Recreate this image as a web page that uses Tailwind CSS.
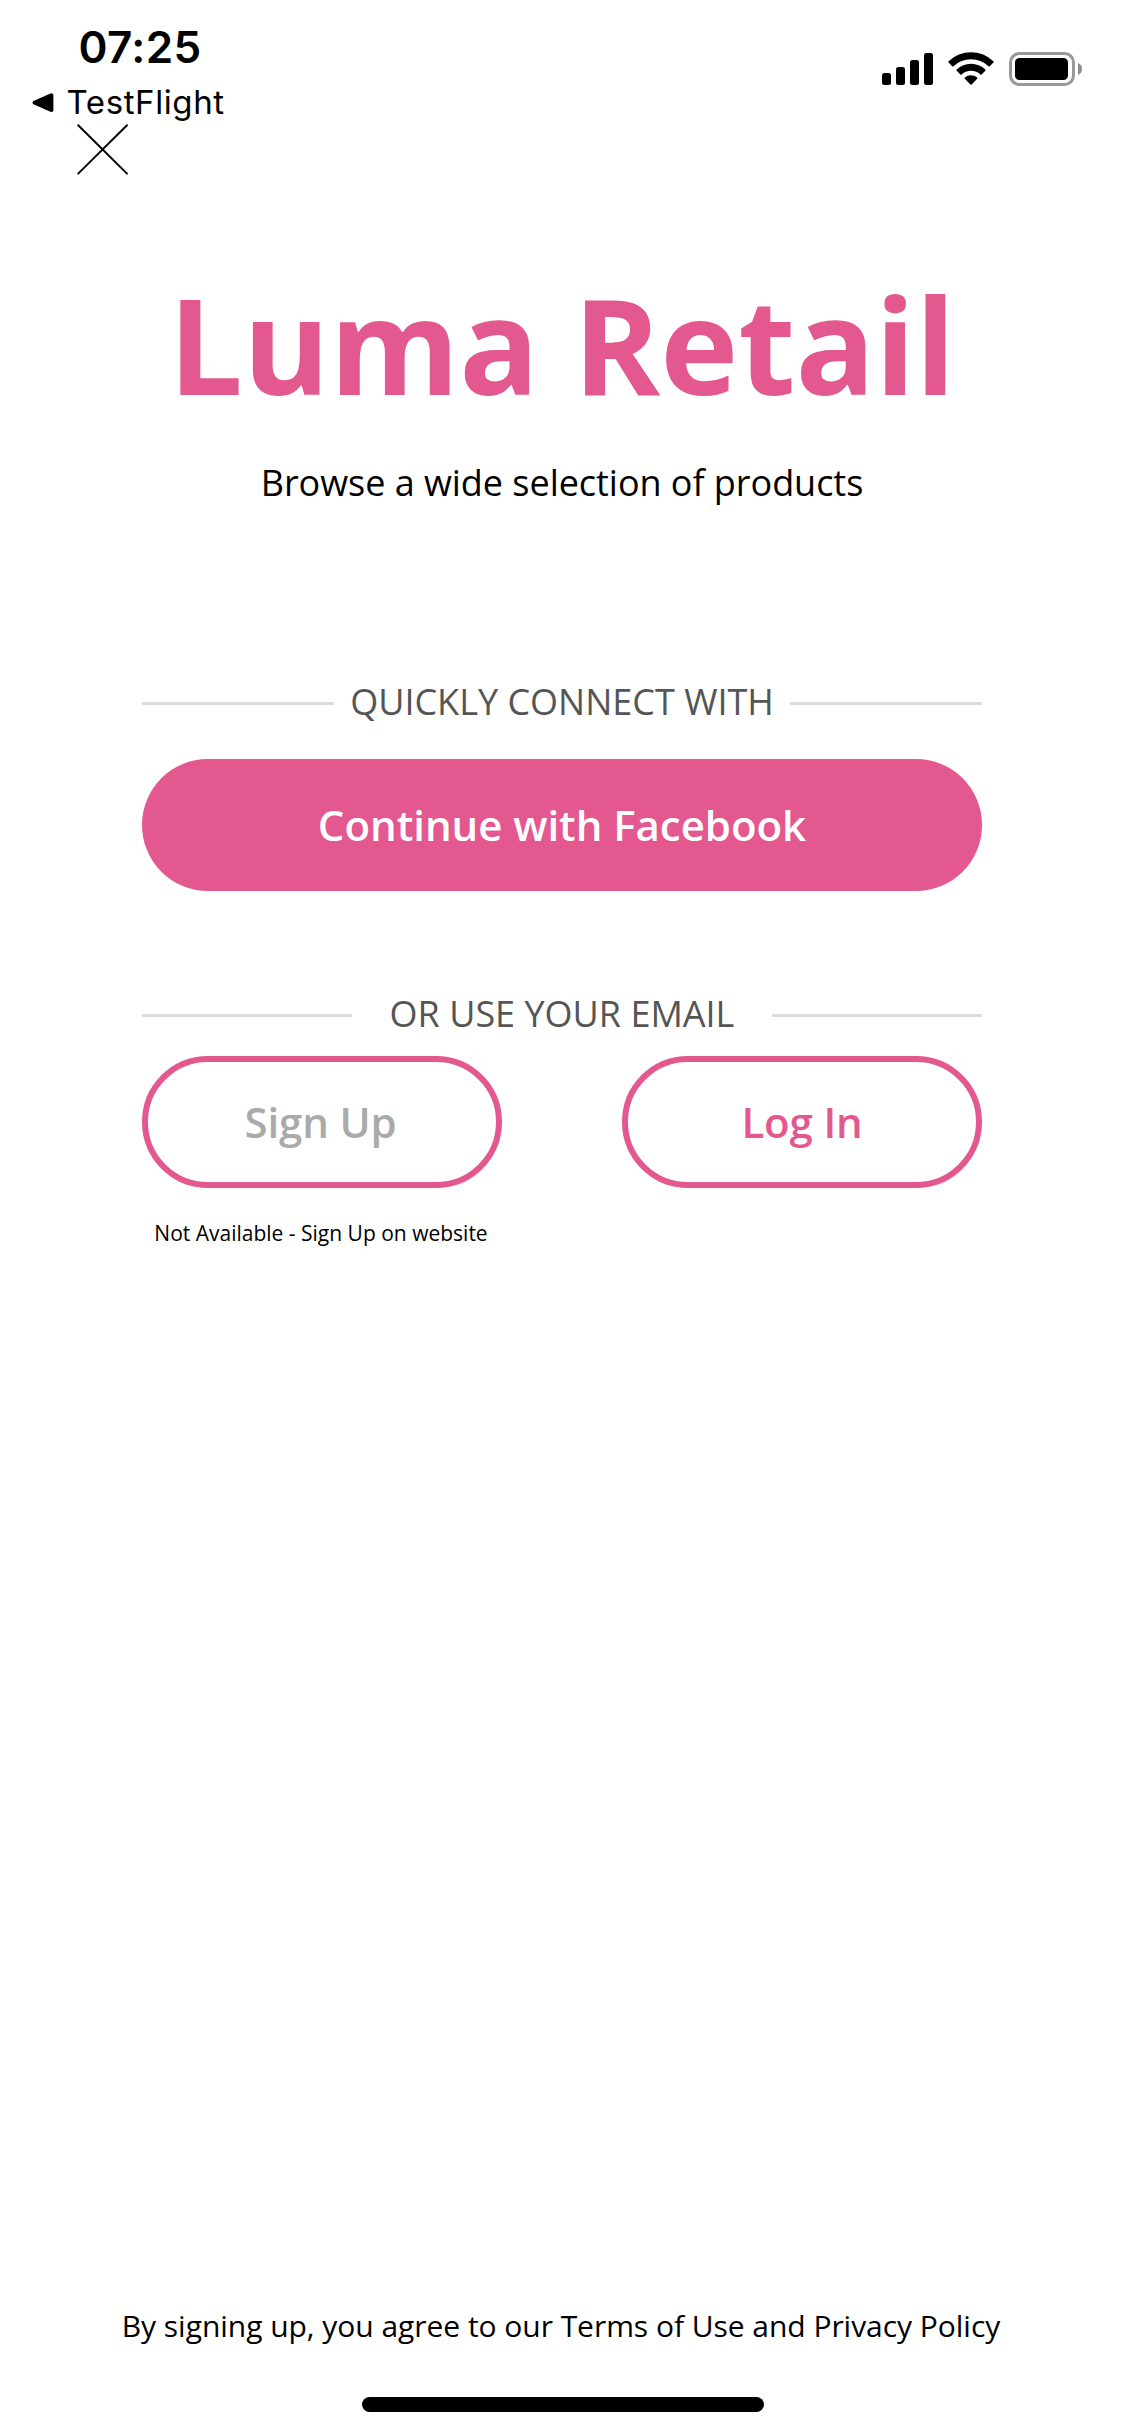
<!DOCTYPE html>
<html lang="en">
<head>
<meta charset="utf-8">
<title>Luma Retail</title>
<script src="https://cdn.jsdelivr.net/npm/@tailwindcss/browser@4"></script>
</head>
<body class="bg-white">
<div class="flex h-[2436px] w-[1125px] flex-col overflow-hidden bg-white font-['Open_Sans',sans-serif] text-black">

  <!-- Status bar -->
  <header class="flex h-[122px] shrink-0 justify-between font-['Inter',sans-serif]">
    <div class="flex flex-col pt-[23px]">
      <span class="pl-[78.5px] text-[44px] leading-[48px] font-[560] tracking-[0.4px]">07:25</span>
      <div class="mt-[11px] flex items-center pl-8">
        <svg class="mt-px h-[22px] w-[22px]" viewBox="0 0 22 22"><path d="M2 10.3 19 2.8Q20 2.4 20 3.4V17.9Q20 18.9 19 18.5L2 11Z" fill="#000" stroke="#000" stroke-width="2.8" stroke-linejoin="round"/></svg>
        <span class="pl-[12.5px] text-[33px] leading-10 tracking-[0.6px]">TestFlight</span>
      </div>
    </div>
    <div class="flex items-start gap-[14px] pt-[52px] pr-[42px]">
      <svg class="h-[34px] w-[52px]" viewBox="0 0 52 34">
        <rect x="0" y="21" width="9" height="12" rx="2.5"/>
        <rect x="14" y="15" width="9" height="18" rx="2.5"/>
        <rect x="28" y="8" width="9" height="25" rx="2.5"/>
        <rect x="42" y="1" width="9" height="32" rx="2.5"/>
      </svg>
      <svg class="h-[34px] w-[46px]" viewBox="0 0 46 34">
        <path d="M0.6 9.3A32 32 0 0 1 45.4 9.3Q46 10 45.4 10.6L41.8 14.2Q41.2 14.7 40.5 14.2A25.3 25.3 0 0 0 5.5 14.2Q4.8 14.7 4.2 14.2L0.6 10.6Q0 10 0.6 9.3Z"/>
        <path d="M8.7 17.4A20.6 20.6 0 0 1 37.3 17.4Q37.9 18.1 37.3 18.7L33.6 22.4Q33 22.9 32.4 22.4A13.7 13.7 0 0 0 13.6 22.4Q13 22.9 12.4 22.4L8.7 18.7Q8.1 18.1 8.7 17.4Z"/>
        <path d="M16.8 25.5A9.4 9.4 0 0 1 29.2 25.5Q29.8 26.1 29.2 26.7L23.6 32.5Q23 33.1 22.4 32.5L16.8 26.7Q16.2 26.1 16.8 25.5Z"/>
      </svg>
      <svg class="ml-px h-[34px] w-[74px]" viewBox="0 0 74 34">
        <rect x="1.5" y="1.5" width="63" height="31" rx="9" fill="none" stroke="#999" stroke-width="3"/>
        <rect x="6" y="6" width="53" height="22" rx="4.5"/>
        <path d="M69 11C71.6 12 73 14.3 73 17S71.6 22 69 23Z" fill="#8c8c8c"/>
      </svg>
    </div>
  </header>

  <!-- Close button -->
  <button class="ml-[76px] block h-[54px] w-[54px] shrink-0" aria-label="Close">
    <svg class="h-[54px] w-[54px]" viewBox="0 0 54 54"><path d="M2.2 3.2 51 51.6M51 3.2 2.2 51.6" fill="none" stroke="#000" stroke-width="2" stroke-linecap="round"/></svg>
  </button>

  <main class="mt-[78px] flex w-[1124px] flex-col px-[142px]">
    <h1 class="text-center text-[132px] leading-[180px] font-bold tracking-[-0.05px] whitespace-nowrap text-[#e3588e]">Luma Retail</h1>
    <p class="mt-[24px] text-center text-[36px] leading-[50px] tracking-[-0.04px]">Browse a wide selection of products</p>

    <div class="mt-[169px] flex h-[53px] items-center justify-between">
      <span class="h-[3px] w-[192px] bg-[#dcdcdc]"></span>
      <span class="self-start text-[36px] leading-[50px] text-[#555]">QUICKLY CONNECT WITH</span>
      <span class="h-[3px] w-[192px] bg-[#dcdcdc]"></span>
    </div>
    <button class="mt-[29px] h-[132px] rounded-full bg-[#e3588e] text-[42px] leading-[58px] font-semibold tracking-[-0.04px] text-white">Continue with Facebook</button>

    <div class="mt-[98px] flex h-[53px] items-center justify-between">
      <span class="h-[3px] w-[210px] bg-[#dcdcdc]"></span>
      <span class="self-start text-[36px] leading-[50px] text-[#555]">OR USE YOUR EMAIL</span>
      <span class="h-[3px] w-[210px] bg-[#dcdcdc]"></span>
    </div>
    <div class="mt-[14px] flex justify-between">
      <button class="h-[132px] w-[360px] rounded-full border-6 border-[#e3588e] pr-[3px] text-[42px] leading-[58px] font-semibold tracking-[-0.15px] text-[#aaa]">Sign Up</button>
      <button class="h-[132px] w-[360px] rounded-full border-6 border-[#e3588e] text-[42px] leading-[58px] font-semibold tracking-[-0.15px] text-[#e3588e]">Log In</button>
    </div>
    <p class="mt-[31px] w-[358px] text-center text-[21px] leading-7">Not Available - Sign Up on website</p>
  </main>

  <footer class="mt-auto flex flex-col items-center pb-6">
    <p class="pr-[3px] text-[30px] leading-[41px] tracking-[-0.04px] whitespace-nowrap">By signing up, you agree to our Terms of Use and Privacy Policy</p>
    <div class="mt-[51px] h-[15px] w-[402px] rounded-full bg-black"></div>
  </footer>
</div>
</body>
</html>
